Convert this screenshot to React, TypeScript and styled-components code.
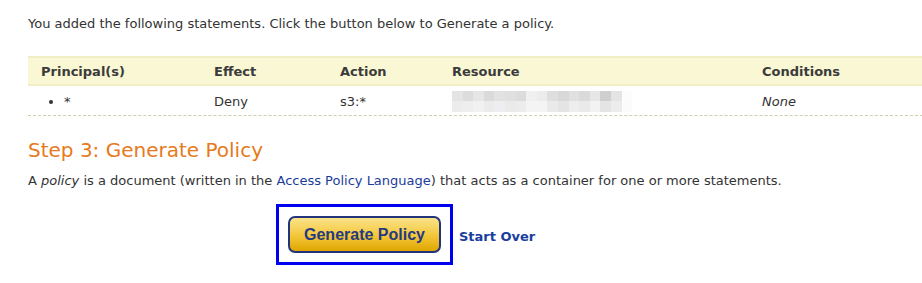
import React from 'react';
import styled, { createGlobalStyle } from 'styled-components';

const GlobalStyle = createGlobalStyle`
  body {
    margin: 0;
    background: #ffffff;
    overflow: hidden;
    font-family: "DejaVu Sans", Verdana, sans-serif;
    color: #333333;
  }
`;

type Statement = {
  principal: string;
  effect: string;
  action: string;
  conditions: string;
};

const statements: Statement[] = [
  { principal: '*', effect: 'Deny', action: 's3:*', conditions: 'None' },
];

// blurred resource text, two rows of grey blocks
const blurTop = ['#e4e4e4', '#dcdcdc', '#e6e6e6', '#dadada', '#e2e2e2', '#e0e0e0', '#dcdcdc', '#f0f0f2', '#ececec', '#dedede', '#d8d8d8', '#e0e0e0', '#dadada', '#e6e6e6', '#cfcfcf', '#e4e4e4', '#fcfcfc'];
const blurBottom = ['#ececec', '#eeeeee', '#f2f0f0', '#ebebeb', '#eeeef2', '#eaeaea', '#ececec', '#f4f4f4', '#f4f4f4', '#eaeaea', '#e4e4e4', '#eeeeee', '#eaeaea', '#f2f2f2', '#e4e4e4', '#ececec', '#fbfbfb'];

const Page = styled.div`
  padding: 16px 0 0 28px;
`;

const Intro = styled.p`
  margin: 0;
  font-size: 13px;
  line-height: 16px;
`;

const Table = styled.div`
  margin-top: 24px;
  width: 920px;
`;

const Row = styled.div<{ $head?: boolean }>`
  display: grid;
  grid-template-columns: 173px 126px 112px 310px 1fr;
  height: 30px;
  align-items: center;
  font-size: 13px;
  background: ${(p) => (p.$head ? '#faf7d4' : '#ffffff')};
  border-top: ${(p) => (p.$head ? '2px solid #f1edc4' : 'none')};
  border-bottom: ${(p) => (p.$head ? '2px solid #f1edc4' : '1px dashed #cdd0a8')};
  box-sizing: border-box;
`;

const HeadCell = styled.div`
  padding-left: 13px;
  font-weight: bold;
  color: #3b3b3b;
`;

const Cell = styled.div<{ $italic?: boolean }>`
  padding-left: 13px;
  padding-top: 1px;
  font-style: ${(p) => (p.$italic ? 'italic' : 'normal')};
`;

const Bullets = styled.ul`
  margin: 0;
  padding: 1px 0 0 36px;
  list-style: disc;
  font-size: 13px;
`;

const Blur = styled.div`
  display: grid;
  grid-template-columns: repeat(17, 10.6px);
  grid-template-rows: 10px 11px;
`;

const BlurCell = styled.div<{ $shade: string }>`
  background: ${(p) => p.$shade};
`;

const Heading = styled.h2`
  margin: 22px 0 0;
  font-size: 20px;
  font-weight: normal;
  line-height: 24px;
  color: #e67a1c;
`;

const Para = styled.p`
  margin: 11px 0 0;
  font-size: 13px;
  line-height: 16px;
`;

const Link = styled.a`
  color: #1a3c9c;
  text-decoration: none;
`;

const Actions = styled.div`
  display: flex;
  align-items: center;
  gap: 6px;
  margin: 15px 0 0 248px;
`;

const Focus = styled.div`
  border: 3px solid #0000f0;
  padding: 9px;
`;

const GenButton = styled.button`
  width: 153px;
  height: 37px;
  border: 2px solid #22357c;
  border-radius: 7px;
  background: linear-gradient(#fae38a, #f3c638 55%, #e0a600);
  font-family: "Liberation Sans", Arial, sans-serif;
  font-weight: bold;
  font-size: 16px;
  color: #253a80;
  cursor: pointer;
`;

const StartOver = styled.a`
  font-size: 13px;
  font-weight: bold;
  color: #1a3ea0;
  text-decoration: none;
  margin-top: 3px;
`;

export default function App() {
  return (
    <Page>
      <GlobalStyle />
      <Intro>You added the following statements. Click the button below to Generate a policy.</Intro>
      <Table>
        <Row $head>
          <HeadCell>Principal(s)</HeadCell>
          <HeadCell>Effect</HeadCell>
          <HeadCell>Action</HeadCell>
          <HeadCell>Resource</HeadCell>
          <HeadCell>Conditions</HeadCell>
        </Row>
        {statements.map((s, i) => (
          <Row key={i}>
            <Bullets>
              <li>{s.principal}</li>
            </Bullets>
            <Cell>{s.effect}</Cell>
            <Cell>{s.action}</Cell>
            <Cell>
              <Blur>
                {blurTop.map((c, j) => (
                  <BlurCell key={'t' + j} $shade={c} />
                ))}
                {blurBottom.map((c, j) => (
                  <BlurCell key={'b' + j} $shade={c} />
                ))}
              </Blur>
            </Cell>
            <Cell $italic>{s.conditions}</Cell>
          </Row>
        ))}
      </Table>
      <Heading>Step 3: Generate Policy</Heading>
      <Para>
        A <i>policy</i> is a document (written in the <Link href="#">Access Policy Language</Link>) that acts as a container for one or more statements.
      </Para>
      <Actions>
        <Focus>
          <GenButton>Generate Policy</GenButton>
        </Focus>
        <StartOver href="#">Start Over</StartOver>
      </Actions>
    </Page>
  );
}
